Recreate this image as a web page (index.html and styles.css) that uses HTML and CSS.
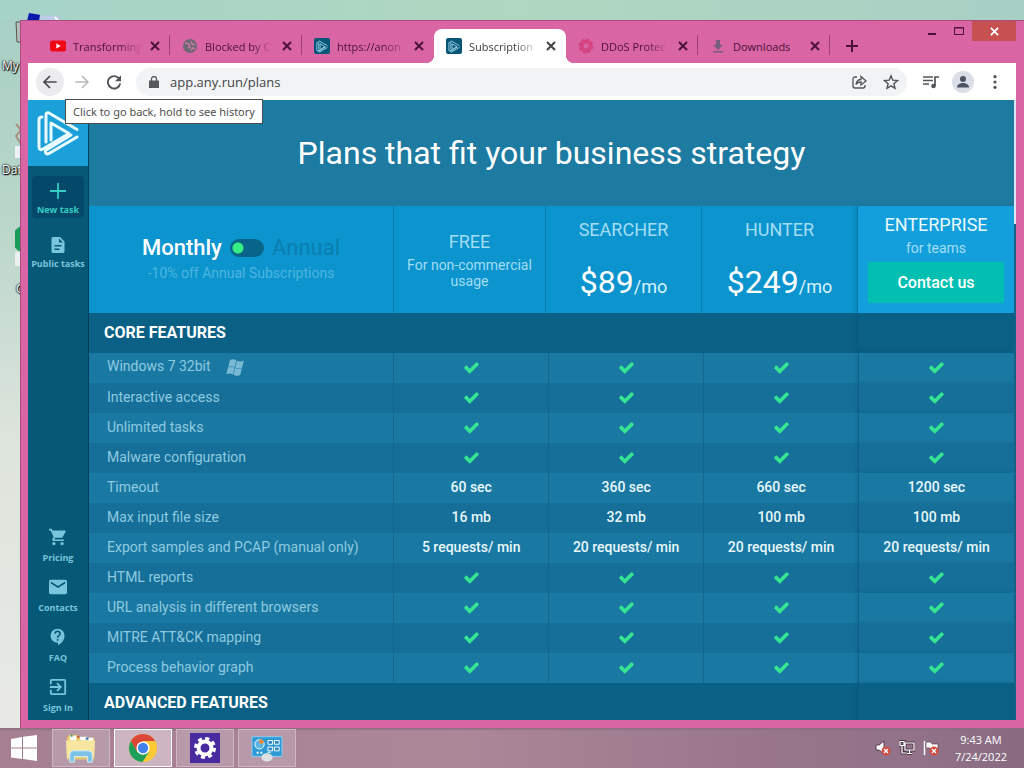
FILE: index.html
```html
<!DOCTYPE html>
<html lang="en">
<head>
<meta charset="utf-8">
<title>Subscription plans</title>
<link rel="stylesheet" href="styles.css">
</head>
<body>
<svg class="defs" aria-hidden="true">
  <symbol id="check" viewBox="0 0 1792 1792"><path fill="currentColor" d="M1671 566q0 40-28 68l-860 860q-28 28-68 28t-68-28l-498-498q-28-28-28-68t28-68l136-136q28-28 68-28t68 28l294 295 656-657q28-28 68-28t68 28l136 136q28 28 28 68z"/></symbol>
  <symbol id="cross" viewBox="0 0 10 10"><path d="M1 1l8 8M9 1l-8 8" fill="none" stroke="currentColor" stroke-width="2"/></symbol>
  <symbol id="triangles" viewBox="0 0 44 48"><g fill="none" stroke="currentColor" stroke-linejoin="round" stroke-linecap="round"><path d="M41 20.500L13 4Q10 3 10 6V33"/><path d="M41 28L13 44.500Q9 46 9.500 41.500L35 26"/><path d="M6 8Q3 8 3 11V38Q3.500 42 7 40L33 24.500L15 14V31"/></g></symbol>
</svg>

<div class="screen">
  <main class="desktop">
    <div class="shortcuts" aria-hidden="true">
      <svg class="flagicon" viewBox="0 0 34 10"><path d="M2 1L14 3 12 9H0z" fill="#0b18ae"/><path d="M13 3L33 4 32 10H12z" fill="#bccce6"/><path d="M28 5l3 4" stroke="#fff" stroke-width="2"/></svg>
      <span class="shortcut my">My</span>
      <span class="shortcut dat">Dat</span>
      <span class="shortcut goo">G</span>
      <svg class="edgeicons" viewBox="0 0 6 280"><path d="M1 2h5v20H2z" fill="#b7bdb9" stroke="#555"/><path d="M1 104l5 6-5 6 5 8" stroke="#a98f7c" fill="none" stroke-width="2"/><path d="M0 126h6v12H0z" fill="#f0eff5"/><path d="M6 206a14 14 0 0 0 0 26z" fill="#1b9b55"/><path d="M0 232h6v14H0z" fill="#eceff0"/></svg>
    </div>

    <section class="window">
      <header class="tabstrip">
        <div class="tabs">
          <div class="tab"><svg viewBox="0 0 16 16"><rect y="2.500" width="16" height="11" rx="2.500" fill="#f00714"/><path d="M6.300 5.500v5L10.800 8z" fill="#fff"/></svg><span class="label">Transforming</span><button aria-label="Close tab"><svg><use href="#cross"/></svg></button></div>
          <div class="tab"><svg viewBox="0 0 16 16"><circle cx="8" cy="8" r="7" fill="#6d6874"/><path d="M3 5l4 1 1 3-2 1M9 3l1 3 3 1M9 12l2-2 2 1" stroke="#c77ba6" stroke-width="1.500" fill="none"/></svg><span class="label">Blocked by C</span><button aria-label="Close tab"><svg><use href="#cross"/></svg></button></div>
          <div class="tab"><span class="anyrun"><svg><use href="#triangles"/></svg></span><span class="label">https://anon</span><button aria-label="Close tab"><svg><use href="#cross"/></svg></button></div>
          <div class="tab active"><span class="anyrun"><svg><use href="#triangles"/></svg></span><span class="label">Subscription</span><button aria-label="Close tab"><svg><use href="#cross"/></svg></button></div>
          <div class="tab"><svg viewBox="0 0 16 16"><circle cx="8" cy="8" r="4.500" fill="none" stroke="#d54380" stroke-width="4"/><circle cx="8" cy="8" r="6.500" fill="none" stroke="#d54380" stroke-width="2" stroke-dasharray="3 2"/></svg><span class="label">DDoS Protec</span><button aria-label="Close tab"><svg><use href="#cross"/></svg></button></div>
          <div class="tab"><svg viewBox="0 0 16 16"><path d="M6 2h4v5h3l-5 5-5-5h3zM3 13h10v1.500H3z" fill="#755f7d"/></svg><span class="label">Downloads</span><button aria-label="Close tab"><svg><use href="#cross"/></svg></button></div>
        </div>
        <button class="newtab" aria-label="New tab"><svg viewBox="0 0 12 12"><path d="M6 0v12M0 6h12" stroke="currentColor" stroke-width="2"/></svg></button>
        <div class="controls">
          <button aria-label="Minimize"><svg viewBox="0 0 12 12"><path d="M2 9h8" stroke="currentColor" stroke-width="2"/></svg></button>
          <button aria-label="Maximize"><svg viewBox="0 0 12 12"><path d="M1.500 2.500h9v7h-9zM1 3h10" fill="none" stroke="currentColor"/></svg></button>
          <button class="close" aria-label="Close"><svg><use href="#cross"/></svg></button>
        </div>
      </header>

      <nav class="toolbar">
        <div class="backwrap">
          <button class="round back" aria-label="Back"><svg viewBox="0 0 24 24"><path d="M22 12H4M12 3l-9 9 9 9" fill="none" stroke="currentColor" stroke-width="2.600"/></svg></button>
          <span class="tooltip" role="tooltip">Click to go back, hold to see history</span>
        </div>
        <button class="round forward" aria-label="Forward"><svg viewBox="0 0 24 24"><path d="M2 12h18M12 3l9 9-9 9" fill="none" stroke="currentColor" stroke-width="2.200"/></svg></button>
        <button class="round" aria-label="Reload"><svg viewBox="0 0 24 24"><path d="M20 7.500A9.300 9.300 0 1 0 21.300 14" fill="none" stroke="currentColor" stroke-width="2.800"/><path d="M22.500 2v9h-9z" fill="currentColor"/></svg></button>
        <div class="omnibox">
          <svg class="lock" viewBox="0 0 10 12"><path d="M0 4.500h10V12H0z" fill="#55585d"/><path d="M2.500 5V3a2.500 2.500 0 0 1 5 0v2" fill="none" stroke="#55585d" stroke-width="1.300"/></svg>
          <input type="text" aria-label="Address" value="app.any.run/plans">
          <button aria-label="Share"><svg viewBox="0 0 16 16" fill="none" stroke="currentColor" stroke-width="1.300"><path d="M6 3H4a2 2 0 0 0-2 2v7a2 2 0 0 0 2 2h8a2 2 0 0 0 2-2v-1"/><path d="M5 10.500C5.500 7 7 5.500 10 5.500V2.500l5 4.500-5 4V8C8 8 6 8.500 5 10.500z"/></svg></button>
          <button aria-label="Bookmark"><svg viewBox="0 0 16 16"><path d="M8 1.800l1.800 4.400 4.700.4-3.600 3.100 1.100 4.600L8 11.800l-4 2.500 1.100-4.600L1.500 6.600l4.700-.4z" fill="none" stroke="currentColor" stroke-width="1.400"/></svg></button>
        </div>
        <button class="tool" aria-label="Media"><svg viewBox="0 0 18 16"><path d="M1 3h10M1 6.500h10M1 10h6M13 12V3h4" stroke="currentColor" stroke-width="1.700" fill="none"/><circle cx="11.500" cy="12" r="2.300" fill="currentColor"/></svg></button>
        <button class="tool avatar" aria-label="Profile"><svg viewBox="0 0 16 16" fill="currentColor"><circle cx="8" cy="5" r="3"/><path d="M2 13.500c0-3 3-4.500 6-4.500s6 1.500 6 4.500z"/></svg></button>
        <button class="tool" aria-label="Menu"><svg viewBox="0 0 16 16" fill="currentColor"><circle cx="8" cy="2.700" r="1.600"/><circle cx="8" cy="8" r="1.600"/><circle cx="8" cy="13.300" r="1.600"/></svg></button>
      </nav>

      <div class="page">
        <aside class="sidebar">
          <a class="logo" href="#" aria-label="Home"><svg><use href="#triangles"/></svg></a>
          <a class="item newtask" href="#"><svg viewBox="0 0 18 18"><path d="M9 1v16M1 9h16" stroke="currentColor" stroke-width="1.800"/></svg><span>New task</span></a>
          <a class="item public" href="#"><svg viewBox="0 0 18 18"><path fill="currentColor" fill-rule="evenodd" d="M4 1h7l4.500 4.500V15.500a1.500 1.500 0 0 1-1.500 1.500H4a1.500 1.500 0 0 1-1.500-1.500v-13A1.500 1.500 0 0 1 4 1zm6 1.500V6.500h4zM5.500 9v1.500h7V9zm0 3.500V14h5v-1.500z"/></svg><span>Public tasks</span></a>
          <div class="bottom">
            <a class="item" href="#"><svg viewBox="1 2 22 20"><path fill="currentColor" d="M7 18c-1.100 0-2 .9-2 2s.9 2 2 2 2-.9 2-2-.9-2-2-2zM1 2v2h2l3.600 7.600-1.400 2.400C4.500 15.400 5.500 17 7 17h12v-2H7.400l1.100-2h7.500c.7 0 1.400-.4 1.700-1l3.600-6.500C21.700 4.800 21.200 4 20.400 4H5.200l-.9-2H1zm16 16c-1.100 0-2 .9-2 2s.9 2 2 2 2-.9 2-2-.9-2-2-2z"/></svg><span>Pricing</span></a>
            <a class="item" href="#"><svg viewBox="2 3 20 18"><path fill="currentColor" d="M20 4H4c-1.100 0-2 .9-2 2v12c0 1.100.9 2 2 2h16c1.100 0 2-.9 2-2V6c0-1.100-.9-2-2-2zm0 4l-8 5-8-5V6l8 5 8-5v2z"/></svg><span>Contacts</span></a>
            <a class="item" href="#"><svg viewBox="1 1 22 22"><path fill="currentColor" d="M11.500 2C6.800 2 3 5.800 3 10.500S6.800 19 11.500 19h.5v3c4.900-2.300 8-7 8-11.500C20 5.800 16.200 2 11.500 2zm1 14.500h-2v-2h2v2zm0-3.500h-2c0-3.300 3-3 3-5a2 2 0 0 0-4 0h-2a4 4 0 0 1 8 0c0 2.500-3 2.800-3 5z"/></svg><span>FAQ</span></a>
            <a class="item" href="#"><svg viewBox="2 2 20 20"><path fill="currentColor" d="M10.100 15.600L11.500 17l5-5-5-5-1.400 1.400 2.600 2.600H3v2h9.700zM19 3H5a2 2 0 0 0-2 2v4h2V5h14v14H5v-4H3v4a2 2 0 0 0 2 2h14a2 2 0 0 0 2-2V5a2 2 0 0 0-2-2z"/></svg><span>Sign In</span></a>
          </div>
        </aside>

        <div class="content">
          <h1>Plans that fit your business strategy</h1>
          <div class="plans">
            <div class="plan billing">
              <div class="switchrow"><label class="monthly" for="billing">Monthly</label><input type="checkbox" id="billing" role="switch"><label class="annual" for="billing">Annual</label></div>
              <p>-10% off Annual Subscriptions</p>
            </div>
            <div class="plan free"><h2>FREE</h2><p>For non-commercial usage</p></div>
            <div class="plan paid"><h2>SEARCHER</h2><div class="price"><strong>$89</strong>/mo</div></div>
            <div class="plan paid"><h2>HUNTER</h2><div class="price"><strong>$249</strong>/mo</div></div>
            <div class="plan enterprise"><h2>ENTERPRISE</h2><p>for teams</p><button>Contact us</button></div>
          </div>
          <table>
            <colgroup><col class="c-name"><col><col><col><col></colgroup>
            <tbody>
              <tr class="section"><th colspan="4" scope="colgroup">CORE FEATURES</th><td></td></tr>
              <tr><th scope="row">Windows 7 32bit<svg class="win" viewBox="0 0 18 17"><path fill="currentColor" d="M4 1C6 0 8 .2 10.300 1.300L8.800 8C6.700 6.900 4.500 6.900 2.300 7.900zM10.900 1.700c2.200 1 4.400 1 6.900 0L16 8.800c-2.200 1-4.500 1-6.700-.2zM2 8.500c2.300-1 4.500-1 6.600.1L7 15.500C4.800 14.300 2.600 14.300.3 15.300zM9.200 9.100c2.100 1.100 4.400 1.200 6.700.2L14.200 16c-2.200 1-4.500 1-6.700-.2z"/></svg></th><td><svg class="check"><use href="#check"/></svg></td><td><svg class="check"><use href="#check"/></svg></td><td><svg class="check"><use href="#check"/></svg></td><td><svg class="check"><use href="#check"/></svg></td></tr>
              <tr><th scope="row">Interactive access</th><td><svg class="check"><use href="#check"/></svg></td><td><svg class="check"><use href="#check"/></svg></td><td><svg class="check"><use href="#check"/></svg></td><td><svg class="check"><use href="#check"/></svg></td></tr>
              <tr><th scope="row">Unlimited tasks</th><td><svg class="check"><use href="#check"/></svg></td><td><svg class="check"><use href="#check"/></svg></td><td><svg class="check"><use href="#check"/></svg></td><td><svg class="check"><use href="#check"/></svg></td></tr>
              <tr><th scope="row">Malware configuration</th><td><svg class="check"><use href="#check"/></svg></td><td><svg class="check"><use href="#check"/></svg></td><td><svg class="check"><use href="#check"/></svg></td><td><svg class="check"><use href="#check"/></svg></td></tr>
              <tr><th scope="row">Timeout</th><td>60 sec</td><td>360 sec</td><td>660 sec</td><td>1200 sec</td></tr>
              <tr><th scope="row">Max input file size</th><td>16 mb</td><td>32 mb</td><td>100 mb</td><td>100 mb</td></tr>
              <tr><th scope="row">Export samples and PCAP (manual only)</th><td>5 requests/ min</td><td>20 requests/ min</td><td>20 requests/ min</td><td>20 requests/ min</td></tr>
              <tr><th scope="row">HTML reports</th><td><svg class="check"><use href="#check"/></svg></td><td><svg class="check"><use href="#check"/></svg></td><td><svg class="check"><use href="#check"/></svg></td><td><svg class="check"><use href="#check"/></svg></td></tr>
              <tr><th scope="row">URL analysis in different browsers</th><td><svg class="check"><use href="#check"/></svg></td><td><svg class="check"><use href="#check"/></svg></td><td><svg class="check"><use href="#check"/></svg></td><td><svg class="check"><use href="#check"/></svg></td></tr>
              <tr><th scope="row">MITRE ATT&amp;CK mapping</th><td><svg class="check"><use href="#check"/></svg></td><td><svg class="check"><use href="#check"/></svg></td><td><svg class="check"><use href="#check"/></svg></td><td><svg class="check"><use href="#check"/></svg></td></tr>
              <tr><th scope="row">Process behavior graph</th><td><svg class="check"><use href="#check"/></svg></td><td><svg class="check"><use href="#check"/></svg></td><td><svg class="check"><use href="#check"/></svg></td><td><svg class="check"><use href="#check"/></svg></td></tr>
              <tr class="section"><th colspan="4" scope="colgroup">ADVANCED FEATURES</th><td></td></tr>
            </tbody>
          </table>
        </div>
        <div class="scrollbar"></div>
      </div>
    </section>
  </main>

  <footer class="taskbar">
    <button class="start" aria-label="Start"><svg viewBox="0 0 26 26"><path fill="#fff" d="M0 4l11-2v10.500H0zM12 1.800L26 0v12.500H12zM0 13.500h11V24L0 22.500zM12 13.500h14V26l-14-2z"/></svg></button>
    <button class="app" aria-label="File Explorer"><svg viewBox="0 0 34 32"><path d="M2 5l2-3h9l2 3h16v22H2z" fill="#e7c864"/><path d="M5 3h7v5H5zM16 4h7v4h-7zM24 5h6v4h-6z" fill="#fff"/><path d="M6 2h2v2H6z" fill="#2a9b46"/><path d="M13 3h2v2h-2z" fill="#d5412c"/><path d="M22 5h3v2h-3z" fill="#2f6dbd"/><path d="M1 8h31l-1 20H2z" fill="#f8e6a0"/><path d="M3 26h28v2H3z" fill="#e2c668"/><path d="M5 31V23q0-4 4-4h16q4 0 4 4v8h-5v-6H10v6z" fill="#7cc3e8" stroke="#d6effa"/></svg></button>
    <button class="app current" aria-label="Google Chrome"><svg viewBox="0 0 32 32"><circle cx="16" cy="16" r="15" fill="#fbc934"/><path d="M3 8.500A15 15 0 0 1 29 8.500H16L9.500 20z" fill="#dc4638"/><path d="M3 8.500L9.500 19.700 16 23.500 22.500 19.700 15.600 31A15 15 0 0 1 3 8.500z" fill="#1da05a"/><circle cx="16" cy="16" r="7" fill="#fff"/><circle cx="16" cy="16" r="5.500" fill="#3f82ee"/></svg></button>
    <button class="app" aria-label="Settings"><svg viewBox="0 0 30 30"><path d="M0 0h30v30H0z" fill="#4a2a9f"/><circle cx="15" cy="15" r="6.500" fill="none" stroke="#fff" stroke-width="4"/><circle cx="15" cy="15" r="9.500" fill="none" stroke="#fff" stroke-width="3" stroke-dasharray="4 3.460"/></svg></button>
    <button class="app" aria-label="Control Panel"><svg viewBox="0 0 34 32"><path d="M1 4h32v21H1z" fill="#2d9ad5" stroke="#8fcff0"/><circle cx="9" cy="12" r="5" fill="#5db5e5" stroke="#fff"/><path d="M9 12V6a6 6 0 0 1 5 4z" fill="#f28a32"/><path d="M18 8h5v4h-5zM25 8h5v4h-5zM18 15h5v4h-5zM25 15h5v4h-5z" fill="#2d86c6" stroke="#fff"/><path d="M6 21h2M10 21h2" stroke="#fff" stroke-width="2"/><ellipse cx="17" cy="26" rx="6" ry="4.500" fill="#dfe0e2"/><path d="M17 22c1-2 3-2 4-1" stroke="#fff" fill="none"/></svg></button>
    <div class="tray">
      <svg viewBox="0 0 16 16"><path d="M1 5h3l5-4v13l-5-4H1z" fill="#fff" stroke="#5a3b4c"/><circle cx="11" cy="11" r="4.500" fill="#d24b41"/><path d="M9 9l4 4M13 9l-4 4" stroke="#fff" stroke-width="1.400"/></svg>
      <svg viewBox="0 0 16 16"><g fill="none" stroke="#54384a" stroke-width="3"><path d="M6 3h9v7H6zM8 13.500h5M10.500 10v3M3 6v7h4M1 1.500h4v4H1z"/></g><g fill="none" stroke="#fff" stroke-width="1.200"><path d="M6 3h9v7H6zM8 13.500h5M10.500 10v3M3 6v7h4M1 1.500h4v4H1z"/></g></svg>
      <svg viewBox="0 0 16 16"><path d="M1.500 1v14" stroke="#fff" stroke-width="1.500"/><path d="M3 2h5l1 2h6v6H8L7 8H3z" fill="#fff" stroke="#5a3b4c" stroke-width=".7"/><circle cx="11" cy="11" r="4.500" fill="#d24b41"/><path d="M9 9l4 4M13 9l-4 4" stroke="#fff" stroke-width="1.400"/></svg>
      <div class="clock"><time>9:43 AM</time><time>7/24/2022</time></div>
    </div>
  </footer>
</div>
</body>
</html>
```
FILE: styles.css
```css
* { box-sizing: border-box; }
body, h1, h2, p { margin: 0; }
body { font-family: Roboto, "Liberation Sans", sans-serif; }
button { border: 0; padding: 0; background: none; font: inherit; color: inherit; display: flex; align-items: center; justify-content: center; }
a { color: inherit; text-decoration: none; }
svg { display: block; flex: none; }
.defs { position: absolute; width: 0; height: 0; }

.screen { display: flex; flex-direction: column; height: 100vh; overflow: hidden; }

/* Desktop */
.desktop { position: relative; flex: 1; min-height: 0; display: flex; padding: 20px 0 0 20px; background: linear-gradient(90deg, #a5d3c8, #b0d7c0 50%, #a8cfc4) top / 100% 20px no-repeat, linear-gradient(#a6cfc4, #b9d6ca 30%, #dde4dc 60%, #e8e9e5); }
.shortcut { position: absolute; font: 12px "Open Sans", sans-serif; color: #fff; text-shadow: 0 0 2px #000, 1px 1px 1px #000, 0 0 2px #000; }
.my { left: 2px; top: 57px; }
.dat { left: 2px; top: 161px; }
.goo { left: 16px; top: 280px; }
.flagicon { position: absolute; left: 27px; top: 12px; width: 34px; height: 10px; }
.edgeicons { position: absolute; left: 15px; top: 20px; width: 6px; height: 280px; }

/* Browser window */
.window { position: relative; flex: 1; min-width: 0; display: flex; flex-direction: column; padding: 0 8px 8px 7px; background: #d965a4; border: 1px solid #a84b80; border-width: 1px 0 0 1px; }
.tabstrip { display: flex; align-items: flex-end; height: 42px; padding-left: 10px; flex: none; color: #4a1238; font: 11px "Open Sans", sans-serif; }
.tabs { display: flex; }
.tab { position: relative; display: flex; align-items: center; width: 132px; height: 34px; padding: 0 9px 0 12px; border-right: 1px solid transparent; border-image: linear-gradient(transparent 20%, #9c3d75 20% 76%, transparent 76%) 1; }
.tab > svg, .anyrun { width: 16px; height: 16px; flex: none; }
.tab .label { flex: 1; min-width: 0; margin: 0 6px 0 7px; white-space: nowrap; -webkit-mask-image: linear-gradient(90deg, #000 65%, transparent 98%); mask-image: linear-gradient(90deg, #000 65%, transparent 98%); }
.tab:last-child .label { -webkit-mask-image: none; mask-image: none; }
.tab button svg { width: 10px; height: 10px; }
.tab:nth-child(3), .tab.active { border-image: none; }
.tab.active { background: #fff; border-radius: 8px 8px 0 0; color: #3e4043; }
.tab.active::before, .tab.active::after { content: ""; position: absolute; bottom: 0; width: 8px; height: 8px; }
.tab.active::before { left: -8px; background: radial-gradient(circle at 0 0, transparent 8px, #fff 8px); }
.tab.active::after { right: -9px; background: radial-gradient(circle at 100% 0, transparent 8px, #fff 8px); }
.anyrun { display: flex; align-items: center; justify-content: center; background: #075577; border-radius: 2px; color: #a7e0f5; }
.anyrun svg { width: 12px; height: 13px; stroke-width: 3; }
.newtab { width: 44px; height: 34px; }
.newtab svg { width: 12px; height: 12px; }
.controls { display: flex; align-self: flex-start; margin-left: auto; }
.controls button { width: 27px; height: 20px; }
.controls svg { width: 12px; height: 12px; }
.controls .close { width: 44px; background: #c75050; color: #fff; }
.controls .close svg { width: 9px; height: 9px; }

.toolbar { position: relative; z-index: 2; display: flex; align-items: center; flex: none; height: 37px; padding: 0 10px 0 8px; background: #fff; color: #515459; }
.backwrap { position: relative; }
.round { width: 28px; height: 28px; margin-right: 4px; border-radius: 50%; }
.round svg { width: 16px; height: 16px; }
.back { background: #ececee; color: #46494d; }
.forward { color: #b5b7b9; }
.tooltip { position: absolute; left: 29px; top: 31px; padding: 3px 7px; background: #fff; border: 1px solid #4c4c4c; color: #505050; font: 11px/17px "Noto Sans", sans-serif; white-space: nowrap; }
.omnibox { flex: 1; display: flex; align-items: center; height: 28px; margin-left: 4px; padding: 0 8px 0 13px; border-radius: 14px; background: #f1f3f4; }
.omnibox .lock { width: 10px; height: 12px; }
.omnibox input { flex: 1; min-width: 0; margin-left: 11px; padding: 0; border: 0; background: none; font: 13px "Open Sans", sans-serif; color: #404347; }
.omnibox button { width: 16px; height: 28px; margin-left: 16px; }
.omnibox svg { width: 16px; height: 16px; }
.tool { width: 22px; height: 22px; margin-left: 11px; }
.tool + .tool { margin-left: 10px; }
.tool svg { width: 16px; height: 16px; }
.omnibox + .tool svg { width: 18px; }
.omnibox + .tool { margin-left: 13px; }
.avatar { border-radius: 50%; background: #dadee6; color: #4b5262; }

/* Page */
.page { flex: 1; min-height: 0; display: flex; overflow: hidden; background: #126e97; }
.sidebar { width: 61px; flex: none; display: flex; flex-direction: column; align-items: center; background: #055977; border-right: 1px solid #053f5c; color: #79c5dc; font: 700 9px/12px "Open Sans", sans-serif; }
.logo { align-self: stretch; display: flex; align-items: center; justify-content: center; height: 66px; background: #1ba0d9; color: #eafbff; }
.logo svg { width: 44px; height: 48px; stroke-width: 3; }
.item { display: flex; flex-direction: column; align-items: center; white-space: nowrap; }
.item svg { width: 18px; height: 18px; margin-bottom: 4px; }
.newtask { width: 52px; height: 42px; margin-top: 10px; padding-top: 6px; border-radius: 4px; background: #04486a; color: #36cdc3; }
.public { margin-top: 18px; }
.bottom { margin-top: auto; display: flex; flex-direction: column; gap: 14px; padding-bottom: 6px; }
.bottom .item svg { margin-bottom: 6px; }

.content { flex: 1; min-width: 0; }
h1 { height: 106px; display: flex; align-items: center; justify-content: center; background: #1d7aa0; color: #fff; font-size: 32px; font-weight: 400; }
.plans { display: grid; grid-template-columns: 305fr 152fr 156fr 156fr 156fr; height: 107px; background: #0b94ce; color: #a3ddf3; text-align: center; }
.plan { display: flex; flex-direction: column; align-items: center; border-right: 1px solid #0a7fb2; }
.plan h2 { font-size: 18px; line-height: 22px; font-weight: 400; }
.plan p { font-size: 14px; line-height: 16px; }
.billing { padding-top: 27px; }
.switchrow { display: flex; align-items: center; gap: 8px; font-size: 22px; line-height: 30px; }
.monthly { font-weight: 500; color: #fff; }
.annual { color: #0b7eaf; }
.billing p { margin-top: 2px; color: #4fb5df; }
.switchrow input { appearance: none; width: 34px; height: 18px; margin: 0; border-radius: 9px; background: radial-gradient(circle at 8px 9px, #36ef84 5px, transparent 6px), #086489; }
.free { padding: 25px 10px 0; }
.free p { margin-top: 4px; }
.paid { padding-top: 13px; }
.price { margin-top: 22px; font-size: 18px; line-height: 38px; color: #d9f3fc; }
.price strong { font-size: 32px; font-weight: 400; color: #fff; }
.enterprise { padding: 8px 10px 0; background: #139fdc; border-right: 0; box-shadow: -3px 0 4px #08628d55; }
.enterprise h2 { color: #e8f9ff; }
.enterprise p { line-height: 18px; margin: 3px 0 5px; }
.enterprise button { align-self: stretch; height: 41px; background: #02bfb1; border-radius: 2px; color: #fff; font-size: 16px; font-weight: 500; }

table { width: 100%; table-layout: fixed; border-collapse: separate; border-spacing: 0; }
.c-name { width: 33%; }
tr { height: 30px; background: #156f98; }
tr:nth-child(even) { background: #1a79a2; }
td, th { padding: 0 0 2px; border-right: 1px solid #12668f; }
td:last-child { border-right: 0; box-shadow: -2px 0 4px #064a7055; }
td { text-align: center; color: #e7f7fc; font-size: 14px; font-weight: 500; }
th { padding-left: 18px; text-align: left; color: #8fcae0; font-size: 14px; font-weight: 400; }
tr.section { height: 40px; background: #0b6085; }
.section th { padding-left: 15px; font-size: 16px; font-weight: 700; color: #fff; border-right-color: #0b6085; }
.check { width: 17px; height: 17px; margin: 0 auto; color: #35e591; }
.win { display: inline-block; width: 18px; height: 17px; margin-left: 15px; vertical-align: middle; color: #79b9d4; }
.scrollbar { width: 2px; flex: none; background: linear-gradient(#dce5f2 124px, #156287 124px); }

/* Taskbar */
.taskbar { display: flex; height: 40px; flex: none; padding: 0 17px 0 0; background: linear-gradient(#8a6b80, transparent 3px), linear-gradient(90deg, #a67f92, #ab8798 45%, #98758a 75%, #917289 90%, #876a80); }
.start { width: 48px; margin-right: 4px; }
.start svg { width: 26px; height: 26px; }
.app { width: 58px; height: 38px; margin: 1px 4px 0 0; border: 1px solid #cfb5c2; background: #b79aa9; }
.app svg { width: 32px; height: 30px; }
.app.current { border-color: #fff; background: #ccb5c1; }
.tray { margin-left: auto; display: flex; align-items: center; gap: 8px; color: #fff; }
.tray svg { width: 16px; height: 16px; }
.clock { display: flex; flex-direction: column; align-items: center; margin-left: 8px; font: 11px/17px "Open Sans", sans-serif; }
```
